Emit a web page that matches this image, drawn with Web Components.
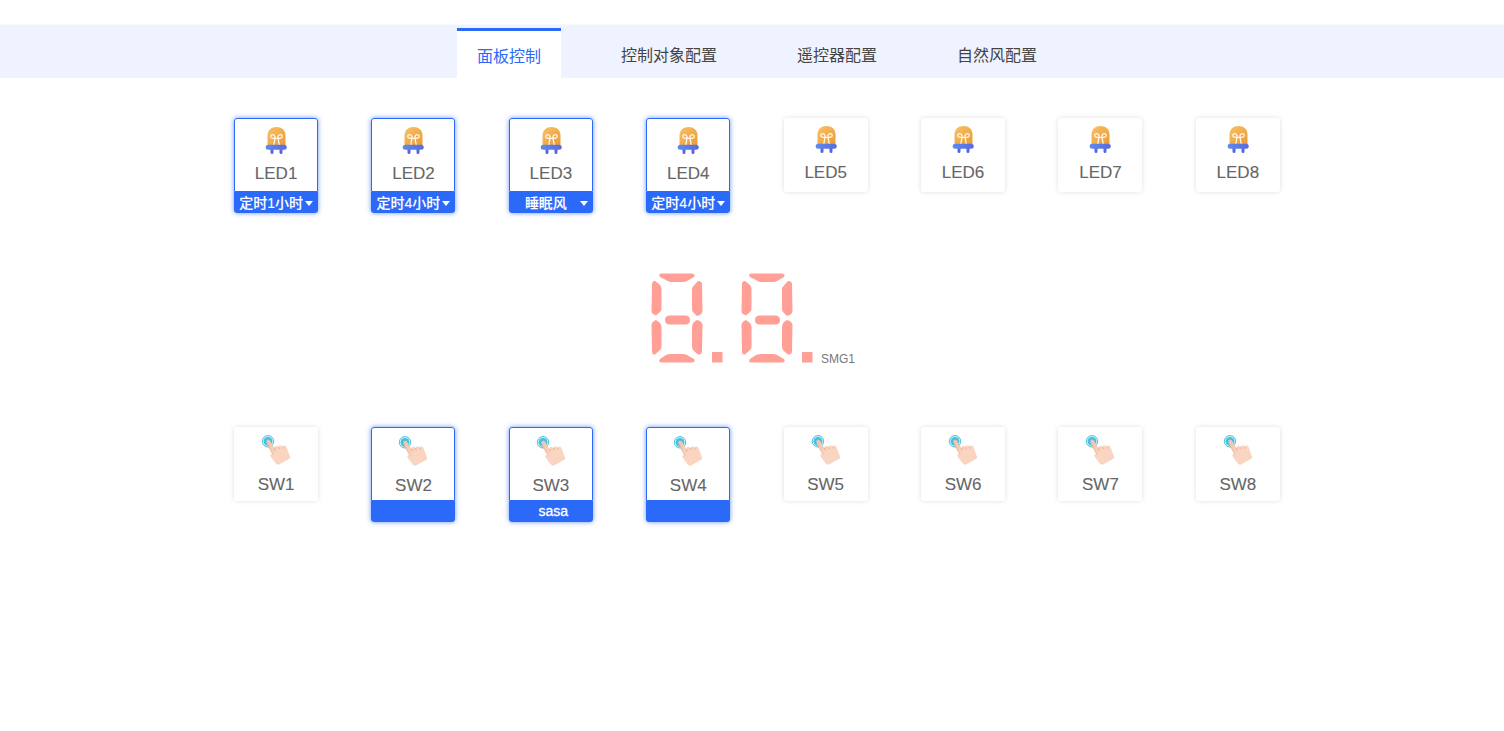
<!DOCTYPE html>
<html lang="zh-CN">
<head>
<meta charset="utf-8">
<meta name="viewport" content="width=device-width, initial-scale=1">
<title>面板控制</title>
<style>
  body { margin: 0; background: #fff; color: #666; font-family: "Liberation Sans", "Noto Sans CJK SC", sans-serif; }
</style>
</head>
<body>
<panel-page></panel-page>

<script>
const define = (name, html, setup) => {
  const template = document.createElement('template');
  template.innerHTML = html;
  customElements.define(name, class extends HTMLElement {
    connectedCallback() {
      if (this.shadowRoot) return;
      const root = this.attachShadow({ mode: 'open' });
      root.append(template.content.cloneNode(true));
      if (setup) setup(this, root);
    }
  });
};

define('nav-tab', `
  <style>
    :host { display: block; }
    a { display: block; box-sizing: border-box; height: 50px; padding: 0 20px; font-size: 16px; line-height: 56px; color: #444; text-decoration: none; white-space: nowrap; }
    :host([active]) a { border-top: 3px solid #2b69f8; background: #fff; color: #2b69f8; line-height: 52px; }
  </style>
  <a href="#"><slot></slot></a>`, (host, root) => {
    if (host.hasAttribute('active')) root.querySelector('a').setAttribute('aria-current', 'page');
  });

define('nav-bar', `
  <style>
    :host { display: block; }
    .shade { height: 4px; padding-top: 23px; background: linear-gradient(#fff, #eceffa) bottom / 100% 4px no-repeat; }
    nav { display: flex; justify-content: center; gap: 40px; padding: 1px 0 0 10px; background: #eff3ff; }
  </style>
  <div class="shade"></div>
  <nav><slot></slot></nav>`);

define('led-icon', `
  <style>:host, svg { display: block; }</style>
  <svg width="22" height="28" viewBox="0 0 22 28" aria-hidden="true">
    <defs>
      <linearGradient id="bulb" x1="0" y1="0" x2="1" y2="1"><stop stop-color="#f8c168"/><stop offset="1" stop-color="#ec9b35"/></linearGradient>
      <linearGradient id="base" x1="0" x2="1"><stop stop-color="#5d8bf0"/><stop offset="1" stop-color="#586bdd"/></linearGradient>
    </defs>
    <path d="M5.500 22h3v4.500a1.500 1.500 0 0 1-3 0zM14.500 22h3v4.500a1.500 1.500 0 0 1-3 0z" fill="#5867db"/>
    <path d="M2.500 19V9.500C2.500 4.300 6.300 1 11.500 1s9 3.300 9 8.500V19z" fill="url(#bulb)"/>
    <path d="M8.700 19.500l1.300-7.500M14.300 19.500L13 12M10 12.200c-1.500.3-4.200 0-4.200-1.800 0-2.300 3.700-2.300 4.200.3zM13 12.200c1.500.3 4.200 0 4.200-1.800 0-2.300-3.700-2.300-4.200.3zM9.800 12.300h3.400" fill="none" stroke="#fff8e9" stroke-width="1.300"/>
    <rect x="0.700" y="18.700" width="21" height="5" rx="2.500" fill="url(#base)"/>
  </svg>`);

define('touch-icon', `
  <style>:host, svg { display: block; }</style>
  <svg width="30" height="31" viewBox="0 0 30 31" aria-hidden="true">
    <defs><linearGradient id="skin" x1="0" x2="1" y2="1"><stop stop-color="#f3c0a5"/><stop offset=".5" stop-color="#fad6c2"/><stop offset="1" stop-color="#f9d2be"/></linearGradient></defs>
    <circle cx="7" cy="7.300" r="5.700" fill="#dff6fb" stroke="#4bbedb" stroke-width="1"/>
    <circle cx="7" cy="7.300" r="4.400" fill="#3fc2e2"/>
    <path d="M5.300 7.600C5.300 5.500 8.200 5 9.300 7l3.900 6.900c.5-1.900 3-2.400 4.200-.9.700-1.700 3-1.900 4.100-.5.900-1.400 3.100-1.300 3.900.3L29 22.700c.3.900 0 1.600-.8 2.100l-9.700 5.500c-1.200.6-2.300.5-3.200-.4l-3.900-4.600c-.7-1.600-2.300-3.200-2.100-4.200.2-1.100 1.800-1 2.900 0L5.800 9.300c-.3-.6-.5-1-.5-1.700z" fill="url(#skin)"/>
    <path d="M13.300 14l1 2.300M17.500 13.200l.8 2M21.600 12.700l.7 2" fill="none" stroke="#e9ae95" stroke-width=".9"/>
    <path d="M5.900 9.500l6.200 11.400" fill="none" stroke="#e8ad92" stroke-width=".8"/>
  </svg>`);

define('device-card', `
  <style>
    :host { display: block; width: 84px; border-radius: 3px; box-shadow: 0 0 5px rgba(0, 0, 0, .13); background: #fff; }
    :host([active]) { box-shadow: 0 0 5px rgba(43, 105, 248, .7); }
    .face { display: flex; flex-direction: column; align-items: center; box-sizing: border-box; height: 74px; padding-top: 7px; }
    :host([active]) .face { border: 1px solid #2b69f8; border-radius: 3px 3px 0 0; }
    .icon { padding-bottom: 8px; }
    .name { font-size: 17px; line-height: 24px; color: #666; -webkit-text-stroke: 0.1px #666; }
  </style>
  <div class="face"><div class="icon"><slot name="icon"></slot></div><div class="name"><slot></slot></div></div>
  <slot name="footer"></slot>`);

define('mode-select', `
  <style>
    :host { display: block; position: relative; height: 21px; border-radius: 0 0 3px 3px; background: #2b69f8; }
    select { appearance: none; display: block; box-sizing: border-box; width: 100%; height: 21px; padding: 1px 15px 0 5px; border: 0; background: transparent; color: #fff; font: 500 14px/20px "Liberation Sans", "Noto Sans CJK SC", sans-serif; text-align: center; -webkit-text-stroke: 0.1px #fff; }
    :host::after { content: ""; position: absolute; right: 5px; top: 9px; border: 4px solid transparent; border-top: 5px solid #fff; border-bottom: 0; pointer-events: none; }
  </style>
  <select><option></option></select>`, (host, root) => {
    root.querySelector('select').setAttribute('aria-label', host.getAttribute('label'));
    root.querySelector('option').textContent = host.getAttribute('value');
  });

define('bound-name', `
  <style>
    :host { display: block; box-sizing: border-box; height: 21px; padding-left: 5px; border-radius: 0 0 3px 3px; background: #2b69f8; color: #fff; font-size: 14px; font-weight: 500; line-height: 20px; text-align: center; -webkit-text-stroke: 0.3px #fff; }
  </style>
  <slot></slot>`);

define('card-row', `
  <style>
    :host { display: flex; justify-content: space-between; align-items: flex-start; width: 70%; margin: 0 auto; }
  </style>
  <slot></slot>`);

define('segment-digit', `
  <style>:host, svg { display: block; }</style>
  <svg width="72" height="90" viewBox="0 0 72 90" fill="#ff9f96" aria-hidden="true">
    <path d="M10 .5H41Q45 1 43 4L36 8Q34 9 32 9H20Q17 9 15 7L9 4Q7 1 10 .5z"/>
    <path d="M4 8Q1 8 1 11L.5 38Q.5 40 2 41L5 42.500 9 39Q10.500 38 10.500 36V16Q10.500 13 8 11z"/>
    <path d="M47 8Q51 8 51 11L51.500 38Q51 42 46 43L42 39Q41 38 41 36V16Q41 14 42.500 13z"/>
    <path d="M18 42.500H35Q39 43 39 47T35 51.500H18Q14 51 14 47T18 42.500z"/>
    <path d="M5 47L9 50Q10.500 52 10.500 54V74Q10.500 76 9 77L4 81.500Q1 82 1 79L.5 52Q.5 49 5 47z"/>
    <path d="M46 47Q51 48 51.500 52L51 78Q51 82 47 81.500L43 78Q41 76 41 74V54Q41 51 43 49z"/>
    <path d="M20 81H32Q34 81 36 82L43 86Q45 89 41 89.500H10Q7 89 9 86L15 82Q17 81 20 81z"/>
    <path d="M61 79H71.500V89.500H61z"/>
  </svg>`);

define('segment-display', `
  <style>
    :host { display: flex; justify-content: center; align-items: flex-end; gap: 18px; padding: 60px 8px 64px 0; }
    .label { margin-left: -10px; font-size: 12px; line-height: 8px; color: #777; }
  </style>
  <segment-digit></segment-digit><segment-digit></segment-digit><span class="label"><slot></slot></span>`);

define('panel-page', `
  <style>
    :host { display: block; }
    main { padding: 40px 0 40px 10px; }
  </style>
  <nav-bar>
    <nav-tab active>面板控制</nav-tab>
    <nav-tab>控制对象配置</nav-tab>
    <nav-tab>遥控器配置</nav-tab>
    <nav-tab>自然风配置</nav-tab>
  </nav-bar>
  <main>
    <card-row>
      <device-card active><led-icon slot="icon"></led-icon>LED1<mode-select slot="footer" label="LED1" value="定时1小时"></mode-select></device-card>
      <device-card active><led-icon slot="icon"></led-icon>LED2<mode-select slot="footer" label="LED2" value="定时4小时"></mode-select></device-card>
      <device-card active><led-icon slot="icon"></led-icon>LED3<mode-select slot="footer" label="LED3" value="睡眠风"></mode-select></device-card>
      <device-card active><led-icon slot="icon"></led-icon>LED4<mode-select slot="footer" label="LED4" value="定时4小时"></mode-select></device-card>
      <device-card><led-icon slot="icon"></led-icon>LED5</device-card>
      <device-card><led-icon slot="icon"></led-icon>LED6</device-card>
      <device-card><led-icon slot="icon"></led-icon>LED7</device-card>
      <device-card><led-icon slot="icon"></led-icon>LED8</device-card>
    </card-row>
    <segment-display>SMG1</segment-display>
    <card-row>
      <device-card><touch-icon slot="icon"></touch-icon>SW1</device-card>
      <device-card active><touch-icon slot="icon"></touch-icon>SW2<bound-name slot="footer"></bound-name></device-card>
      <device-card active><touch-icon slot="icon"></touch-icon>SW3<bound-name slot="footer">sasa</bound-name></device-card>
      <device-card active><touch-icon slot="icon"></touch-icon>SW4<bound-name slot="footer"></bound-name></device-card>
      <device-card><touch-icon slot="icon"></touch-icon>SW5</device-card>
      <device-card><touch-icon slot="icon"></touch-icon>SW6</device-card>
      <device-card><touch-icon slot="icon"></touch-icon>SW7</device-card>
      <device-card><touch-icon slot="icon"></touch-icon>SW8</device-card>
    </card-row>
  </main>`);
</script>
</body>
</html>
